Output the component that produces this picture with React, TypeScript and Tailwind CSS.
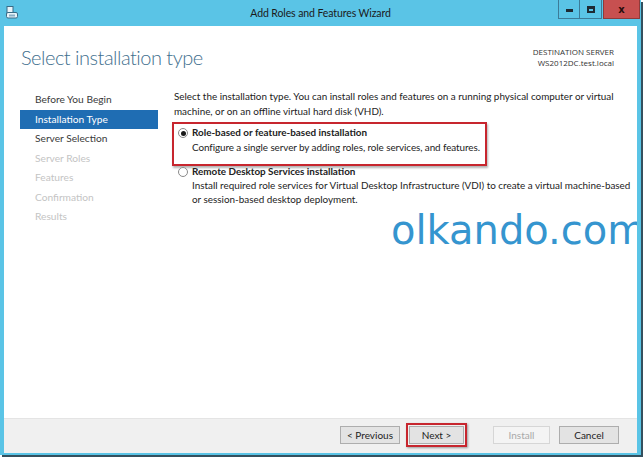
import React from "react";

const navItems = [
  { label: "Before You Begin", state: "done" },
  { label: "Installation Type", state: "active" },
  { label: "Server Selection", state: "done" },
  { label: "Server Roles", state: "off" },
  { label: "Features", state: "off" },
  { label: "Confirmation", state: "off" },
  { label: "Results", state: "off" },
];

function Radio({ checked }: { checked: boolean }) {
  return (
    <span className="mt-[3px] flex h-[10px] w-[10px] shrink-0 items-center justify-center rounded-full border border-[#8a8a8a] bg-white">
      {checked ? <span className="h-[5px] w-[5px] rounded-full bg-[#1b1b1b]" /> : null}
    </span>
  );
}

function WizardButton({
  children,
  disabled,
  className,
}: {
  children: React.ReactNode;
  disabled?: boolean;
  className?: string;
}) {
  return (
    <button
      type="button"
      className={
        "flex h-[18px] items-center justify-center border text-[10px] " +
        (disabled
          ? "border-[#d6d6d6] bg-[#f4f4f4] text-[#a8a8a8] "
          : "border-[#adadad] bg-[#e3e3e3] text-[#222] ") +
        (className ?? "")
      }
    >
      {children}
    </button>
  );
}

export default function App() {
  return (
    <div className="relative h-[459px] w-[644px] overflow-hidden bg-white font-['Lato',sans-serif]">
      <div className="flex h-[455px] w-[641px] flex-col bg-[#5ac4e6] shadow-[2px_2px_0_#34505e]">
        {/* title bar */}
        <div className="relative flex h-[26px] shrink-0 items-center justify-center">
          <svg className="absolute left-[6px] top-[6px]" width="13" height="13" viewBox="0 0 13 13">
            <rect x="1" y="0.5" width="6" height="8" fill="#e8f4fa" stroke="#3a6b86" />
            <rect x="0.5" y="6.5" width="11" height="5.5" rx="1.5" fill="#e8f4fa" stroke="#3a6b86" />
            <rect x="3" y="8.5" width="6" height="2" fill="#8bb0c6" />
          </svg>
          <span className="pt-px text-[10.5px] tracking-[-0.1px] text-[#1a1a1a]">Add Roles and Features Wizard</span>
          <div className="absolute right-[1px] top-0 flex h-[19px]">
            <div className="flex w-[22px] items-center justify-center border border-t-0 border-[#3c7b98] bg-[#5ac4e6]">
              <span className="mt-[3px] h-[3px] w-[7px] bg-[#1e2a33]" />
            </div>
            <div className="flex w-[22px] items-center justify-center border border-l-0 border-t-0 border-[#3c7b98] bg-[#5ac4e6]">
              <span className="h-[7px] w-[8px] border-[2px] border-t-[3px] border-[#1e2a33]" />
            </div>
            <div className="ml-[1px] flex w-[37px] items-center justify-center border border-t-0 border-[#8e3a3a] bg-[#c75050] font-['DejaVu_Sans',sans-serif] text-[10px] font-bold text-[#2a0c0c]">
              x
            </div>
          </div>
        </div>

        {/* body */}
        <div className="mx-[4px] mb-[2px] flex flex-1 flex-col bg-white">
          <div className="relative flex flex-1 flex-col overflow-hidden">
            <div className="flex items-start justify-between pl-[17px] pr-[23px] pt-[17px]">
              <h1 className="text-[20px] font-light leading-[28px] tracking-[-0.5px] text-[#3f6f8e]">
                Select installation type
              </h1>
              <div className="mt-[3px] text-right font-['Open_Sans',sans-serif] text-[8px] leading-[11px] text-[#333]">
                <div>DESTINATION SERVER</div>
                <div>WS2012DC.test.local</div>
              </div>
            </div>

            <div className="mt-[17px] flex flex-1">
              <nav className="flex w-[155px] shrink-0 flex-col pb-[16px] pl-[16px] pt-[2px]">
                {navItems.map((item) => (
                  <div
                    key={item.label}
                    className={
                      "flex h-[19.5px] w-[138px] items-center pl-[15px] text-[10.2px] " +
                      (item.state === "active"
                        ? "bg-[#1f6db3] text-white"
                        : item.state === "done"
                          ? "text-[#3a3a3a]"
                          : "text-[#c4c4c4]")
                    }
                  >
                    {item.label}
                  </div>
                ))}
              </nav>
              <div className="mb-[16px] w-px bg-[#d9d9d9]" />
              <div className="flex-1 whitespace-nowrap pl-[15px] pr-[16px] pt-px text-[9.9px] leading-[15px] text-[#222]">
                <p>
                  Select the installation type. You can install roles and features on a running physical computer or virtual
                  <br />
                  machine, or on an offline virtual hard disk (VHD).
                </p>

                <div className="ml-[-2px] mt-[3px] w-[315px] border-2 border-[#c7262e] pb-[9px] pl-[4px] pt-[1px] shadow-[1px_2px_2px_rgba(0,0,0,0.3)]">
                  <div className="flex gap-[4px]">
                    <Radio checked />
                    <div>
                      <div className="font-bold">Role-based or feature-based installation</div>
                      <div className="tracking-[-0.08px]">
                        Configure a single server by adding roles, role services, and features.
                      </div>
                    </div>
                  </div>
                </div>

                <div className="mt-[-2px] flex gap-[4px] pl-[4px]">
                  <Radio checked={false} />
                  <div>
                    <div className="font-bold leading-[14px]">Remote Desktop Services installation</div>
                    <div className="leading-[14px]">
                      Install required role services for Virtual Desktop Infrastructure (VDI) to create a virtual machine-based
                      <br />
                      or session-based desktop deployment.
                    </div>
                  </div>
                </div>
              </div>
            </div>

            <div className="absolute left-[387px] top-[180px] whitespace-nowrap font-['DejaVu_Sans',sans-serif] text-[40px] leading-[48px] text-[#3595cf]">
              olkando.com
            </div>
          </div>

          <div className="flex h-[35px] shrink-0 items-center border-t border-[#e4e4e4] bg-[#f0f0f0] pb-[2px] pl-[336px]">
            <WizardButton className="w-[60px]">&lt; Previous</WizardButton>
            <div className="ml-[6px] border-2 border-[#c7262e] p-px shadow-[1px_1px_2px_rgba(0,0,0,0.35)]">
              <WizardButton className="w-[55px]">Next &gt;</WizardButton>
            </div>
            <WizardButton disabled className="ml-[26px] w-[57px]">
              Install
            </WizardButton>
            <WizardButton className="ml-[9px] w-[60px]">Cancel</WizardButton>
          </div>
        </div>
      </div>
    </div>
  );
}
